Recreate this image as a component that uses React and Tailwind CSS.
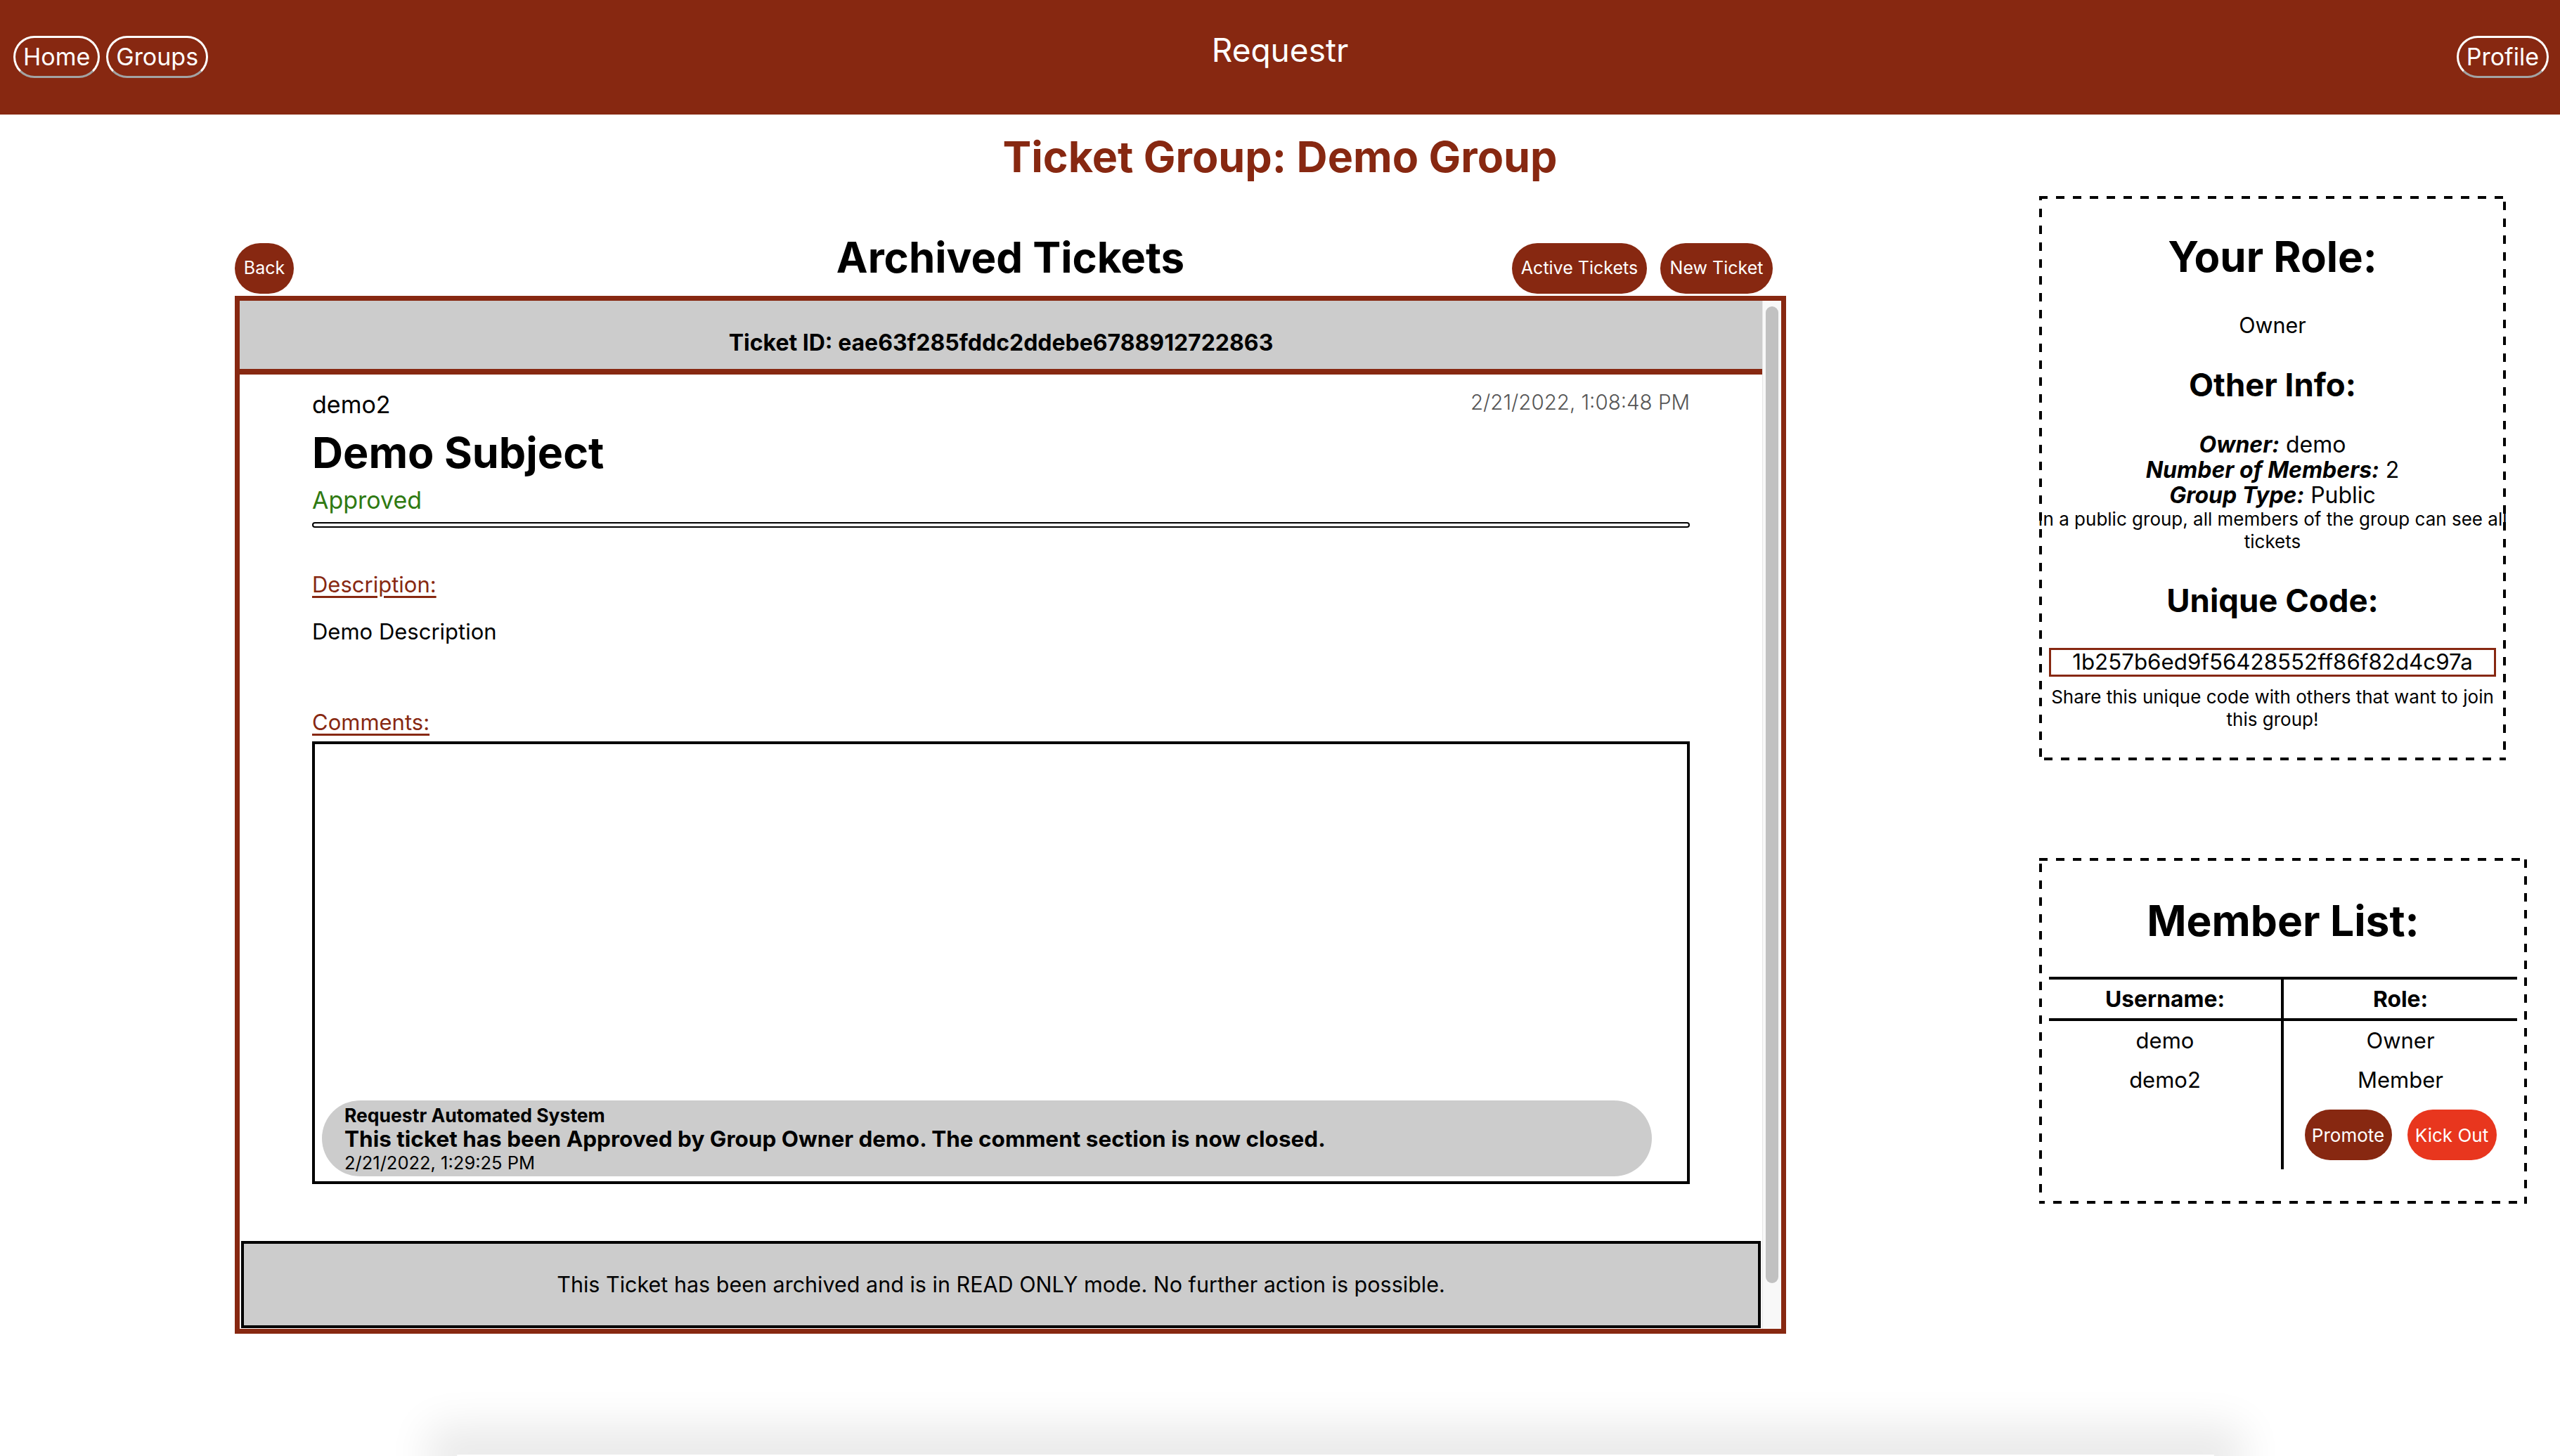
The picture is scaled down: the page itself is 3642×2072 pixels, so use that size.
import React from 'react'

const brand = 'bg-[#872811]'

function NavPill({ children }) {
  return (
    <button className="rounded-full border-[3px] border-white border-b-[#a3a3a3] px-[11px] py-[6px] text-[34px] leading-[42px] text-white">
      {children}
    </button>
  )
}

function Header() {
  return (
    <header className={`grid h-[163px] shrink-0 grid-cols-[1fr_auto_1fr] items-start ${brand}`}>
      <nav className="flex items-start gap-[9px] pl-[19px] pt-[51px]">
        <NavPill>Home</NavPill>
        <NavPill>Groups</NavPill>
      </nav>
      <div className="pt-[43px] text-[46px] leading-[56px] text-white">Requestr</div>
      <div className="flex items-start justify-end pr-[16px] pt-[51px]">
        <NavPill>Profile</NavPill>
      </div>
    </header>
  )
}

function RoundButton({ children, className = '' }) {
  return (
    <button className={`flex h-[72px] items-center justify-center rounded-full text-white ${className}`}>
      {children}
    </button>
  )
}

// dashed outline with long dashes, drawn under the text in the border area
function DashedBox({ className = '', children }) {
  return (
    <section className={`relative isolate border-4 border-transparent ${className}`}>
      <svg className="pointer-events-none absolute -inset-1 -z-10 h-[calc(100%+8px)] w-[calc(100%+8px)] overflow-hidden">
        <rect x="0" y="0" width="100%" height="100%" fill="none" stroke="black" strokeWidth="8" strokeDasharray="12 12" />
      </svg>
      {children}
    </section>
  )
}

function Ticket() {
  return (
    <div className="mt-[3px] flex h-[1477px] border-[7px] border-[#872811]">
      <div className="flex flex-1 flex-col">
        {/* id bar */}
        <div className="h-[105px] border-b-[8px] border-[#872811] bg-[#cccccc] pt-[41px] text-center text-[32px] font-bold leading-[38px]">
          Ticket ID: eae63f285fddc2ddebe6788912722863
        </div>

        <div className="px-[103px]">
          <div className="flex items-start justify-between pt-[22px]">
            <p className="text-[34px] leading-[41px]">demo2</p>
            <p className="-mt-[3px] text-[29.5px] font-light leading-[40px] text-[#555]">2/21/2022, 1:08:48 PM</p>
          </div>
          <h2 className="mt-[13px] text-[61px] font-bold leading-[70px]">Demo Subject</h2>
          <p className="mt-[12px] text-[34px] leading-[41px] text-[#2f7a12]">Approved</p>
          <div className="mt-[11px] h-[8px] rounded-full border-2 border-black" />

          <p className="mt-[61px] text-[31px] leading-[39px] text-[#872811] underline underline-offset-[5px]">Description:</p>
          <p className="mt-[28px] text-[31px] leading-[39px]">Demo Description</p>

          <p className="mt-[90px] text-[31px] leading-[39px] text-[#872811] underline underline-offset-[5px]">Comments:</p>
          <div className="mt-[8px] flex h-[630px] flex-col justify-end border-4 border-black pb-[7px] pl-[10px]">
            <div className="w-[1892px] rounded-[54px] bg-[#cccccc] pb-[4px] pl-[32px] pt-[6px]">
              <p className="text-[26.5px] font-bold leading-[30px]">Requestr Automated System</p>
              <p className="text-[31.5px] font-bold leading-[37px]">
                This ticket has been Approved by Group Owner demo. The comment section is now closed.
              </p>
              <p className="mt-[1px] text-[25.5px] leading-[30px]">2/21/2022, 1:29:25 PM</p>
            </div>
          </div>
        </div>

        <div className="mx-[2px] mt-[81px] flex h-[124px] items-center justify-center border-4 border-black bg-[#cccccc] text-[30.5px]">
          This Ticket has been archived and is in READ ONLY mode. No further action is possible.
        </div>
      </div>

      {/* scrollbar */}
      <div className="w-[27px] border-l border-[#e6e6e6] bg-[#f8f8f8]">
        <div className="mx-auto mt-[8px] h-[1390px] w-[18px] rounded-full bg-[#c1c1c1]" />
      </div>
    </div>
  )
}

function RoleBox() {
  return (
    <DashedBox className="flex w-[664px] flex-col items-center px-[10px] pb-[38px] pt-[48px] text-center">
      <h2 className="text-[60px] font-bold leading-[68px]">Your Role:</h2>
      <p className="mt-[44px] text-[30.5px] leading-[39px]">Owner</p>
      <h3 className="mt-[39px] text-[45.5px] font-bold leading-[53px]">Other Info:</h3>
      <div className="mt-[41px] text-[32px] leading-[36px]">
        <p><b className="italic">Owner:</b> demo</p>
        <p><b className="italic">Number of Members:</b> 2</p>
        <p><b className="italic">Group Type:</b> Public</p>
      </div>
      <p className="-mx-[14px] text-[26px] leading-[32px]">
        <span className="whitespace-nowrap">In a public group, all members of the group can see all</span>
        <br />
        tickets
      </p>
      <h3 className="mt-[41px] text-[45.5px] font-bold leading-[53px]">Unique Code:</h3>
      <div className="mt-[41px] w-full border-[3px] border-[#872811] text-[31.3px] leading-[35px]">
        1b257b6ed9f56428552ff86f82d4c97a
      </div>
      <p className="mt-[13px] text-[26px] leading-[32px]">
        Share this unique code with others that want to join this group!
      </p>
    </DashedBox>
  )
}

function MemberBox() {
  const members = [
    ['demo', 'Owner'],
    ['demo2', 'Member'],
  ]
  return (
    <DashedBox className="w-[694px] px-[10px] pb-[45px] pt-[51px]">
      <h2 className="text-center text-[60.5px] font-bold leading-[69px]">Member List:</h2>
      <div className="mt-[45px] flex border-t-4 border-black text-center text-[31px]">
        <div className="w-[334px] border-r-4 border-black pb-[13px]">
          <div className="h-[59px] border-b-4 border-black text-[31.8px] font-bold leading-[55px]">Username:</div>
          {members.map(([name]) => (
            <p key={name} className="leading-[56px]">{name}</p>
          ))}
        </div>
        <div className="flex-1 pb-[13px]">
          <div className="h-[59px] border-b-4 border-black text-[31.8px] font-bold leading-[55px]">Role:</div>
          {members.map(([name, role]) => (
            <p key={name} className="leading-[56px]">{role}</p>
          ))}
          <div className="mt-[14px] flex justify-center gap-[22px]">
            <RoundButton className="w-[124px] bg-[#872811] text-[26px]">Promote</RoundButton>
            <RoundButton className="w-[127px] bg-[#e8361e] text-[26px]">Kick Out</RoundButton>
          </div>
        </div>
      </div>
    </DashedBox>
  )
}

export default function App() {
  return (
    <div className="flex h-[2072px] flex-col overflow-hidden bg-white font-['Inter','Liberation_Sans',sans-serif] text-black">
      <Header />

      <h1 className="mt-[25px] text-center text-[61px] font-bold leading-[70px] text-[#872811]">
        Ticket Group: Demo Group
      </h1>

      <div className="flex items-start">
        <main className="ml-[334px] mt-[73px] w-[2207px]">
          <div className="grid grid-cols-[1fr_auto_1fr] items-end">
            <div>
              <RoundButton className={`w-[84px] text-[25px] ${brand}`}>Back</RoundButton>
            </div>
            <h2 className="mb-[17px] text-[60px] font-bold leading-[70px]">Archived Tickets</h2>
            <div className="flex justify-end gap-[19px] pr-[19px]">
              <RoundButton className={`w-[192px] text-[25px] ${brand}`}>Active Tickets</RoundButton>
              <RoundButton className={`w-[160px] text-[25px] ${brand}`}>New Ticket</RoundButton>
            </div>
          </div>
          <Ticket />
        </main>

        <aside className="ml-[360px] mt-[21px] flex flex-col gap-[139px]">
          <RoleBox />
          <MemberBox />
        </aside>
      </div>

      {/* soft shadow of an element below the fold */}
      <div className="mt-auto ml-[650px] h-[2px] w-[2500px] shrink-0 rounded-full shadow-[0_0_60px_40px_rgba(0,0,0,0.09)]" />
    </div>
  )
}
